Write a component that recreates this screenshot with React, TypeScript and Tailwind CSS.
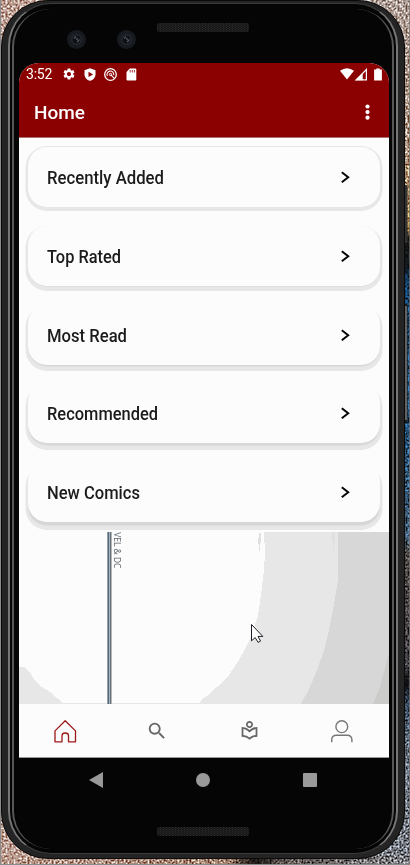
import React from "react";
import { MdSettings, MdSearch, MdOutlineLocalLibrary } from "react-icons/md";

const rows = [
  { label: "Recently Added", width: 117, shadow: "shadow-[0_1.5px_0_2.5px_#e7e7e7]" },
  { label: "Top Rated", width: 74, shadow: "shadow-[0_0.5px_0_0_#d8d8d8,0_2.5px_0_2.5px_#e7e7e7]" },
  { label: "Most Read", width: 80, shadow: "shadow-[0_1.5px_0_0_#d8d8d8,0_3.5px_0_2.5px_#e7e7e7]" },
  { label: "Recommended", width: 111, shadow: "shadow-[0_2.5px_0_0_#d8d8d8,0_4.5px_0_2.5px_#e7e7e7]" },
  { label: "New Comics", width: 93, shadow: "shadow-[0_3.5px_0_0_#d6d6d6,0_5.5px_0_2.5px_#e7e7e7]" },
];

function Wallpaper() {
  return (
    <svg className="absolute inset-0" width="410" height="865">
      <defs>
        <linearGradient id="right" x1="0" y1="0" x2="0" y2="1">
          <stop offset="0" stopColor="#a89b96" />
          <stop offset=".18" stopColor="#a8927f" />
          <stop offset=".26" stopColor="#ab854a" />
          <stop offset=".275" stopColor="#15130f" />
          <stop offset=".31" stopColor="#0c141c" />
          <stop offset=".325" stopColor="#123e66" />
          <stop offset=".5" stopColor="#204b70" />
          <stop offset=".62" stopColor="#3d5a75" />
          <stop offset=".64" stopColor="#4a4644" />
          <stop offset=".77" stopColor="#3b3a40" />
          <stop offset=".79" stopColor="#0a0a0c" />
          <stop offset=".81" stopColor="#2f4258" />
          <stop offset=".87" stopColor="#5f6a78" />
          <stop offset="1" stopColor="#727982" />
        </linearGradient>
        <linearGradient id="bottom" x1="0" x2="1">
          <stop offset="0" stopColor="#b89b90" />
          <stop offset=".55" stopColor="#9f8070" />
          <stop offset=".62" stopColor="#1a1614" />
          <stop offset=".7" stopColor="#5b5552" />
          <stop offset="1" stopColor="#777b82" />
        </linearGradient>
        <filter id="grain" x="0" y="0" width="100%" height="100%" colorInterpolationFilters="sRGB">
          <feTurbulence type="fractalNoise" baseFrequency=".5" numOctaves="3" seed="4" />
          <feColorMatrix values="2.4 0 0 0 -.66  2.4 0 0 0 -.68  2.4 0 0 0 -.69  0 0 0 0 1" />
        </filter>
      </defs>
      <rect width="205" height="865" fill="#b89c92" />
      <rect x="205" width="205" height="865" fill="url(#right)" />
      <rect y="855" width="410" height="10" fill="url(#bottom)" />
      <rect width="410" height="865" filter="url(#grain)" opacity=".85" style={{ mixBlendMode: "overlay" }} />
      <path d="M.5 0V864.5H410" fill="none" stroke="#8b8b8b" />
      <path d="M409.5 0V865" stroke="#777" strokeOpacity=".7" />
      <rect x="403" y="185" width="4.5" height="58" rx="1" fill="#333" />
      <rect x="403" y="304" width="4.5" height="118" rx="1" fill="#181818" />
      <path d="M406 306V420" stroke="#8a8a8a" strokeWidth="1.3" />
    </svg>
  );
}

function Speaker() {
  return (
    <svg width="92" height="9" className="block">
      <defs>
        <pattern id="mesh" width="3" height="2" patternUnits="userSpaceOnUse">
          <rect width="3" height="2" fill="#171717" />
          <rect width="1" height="1" fill="#2c2c2c" />
          <rect x="1.5" y="1" width="1" height="1" fill="#272727" />
        </pattern>
      </defs>
      <rect width="92" height="9" rx="2" fill="url(#mesh)" />
    </svg>
  );
}

function Camera() {
  return (
    <svg width="19" height="19" viewBox="0 0 19 19">
      <circle cx="9.5" cy="9.5" r="9.5" fill="#171b20" />
      <circle cx="9.5" cy="9.5" r="6" fill="#20242a" />
      <circle cx="9.5" cy="9.5" r="3.7" fill="#0c0e12" />
      <path d="M7 8.5L9 6.5M10 12L12.5 9.5" stroke="#535862" strokeWidth="1.2" />
      <circle cx="10" cy="9" r="1.2" fill="#3c414c" />
    </svg>
  );
}

function StatusBar() {
  return (
    <div className="flex h-[22px] items-center pl-[7px] pr-[7px] text-white">
      <span className="w-[36px] text-[14px] leading-[22px] tracking-[-0.2px]">3:52</span>
      <MdSettings className="size-[14px]" />
      <svg className="ml-[8px]" width="12" height="13" viewBox="0 0 12 13">
        <path d="M6 .3L11.5 2.3V6.2C11.5 9.4 9.2 11.9 6 12.8C2.8 11.9.5 9.4.5 6.2V2.3Z" fill="white" />
        <path d="M4.5 3.7L9 6.4L4.5 9.1Z" fill="#8b0000" />
      </svg>
      <svg className="ml-[8px]" width="13" height="13" viewBox="0 0 13 13" fill="none" stroke="white">
        <circle cx="6.5" cy="6.5" r="5.8" strokeWidth="1.3" />
        <path d="M3.4 8.1A3.4 3.4 0 1 1 9.7 7.2M6.6 6.6L10.6 10.6" strokeWidth="1.1" />
        <circle cx="6.5" cy="6.5" r="1.2" strokeWidth="1" />
      </svg>
      <svg className="ml-[9px]" width="11" height="13" viewBox="0 0 11 13">
        <path d="M3.8.5H9.3Q10.3.5 10.3 1.5V11.5Q10.3 12.5 9.3 12.5H1.5Q.5 12.5.5 11.5V4Z" fill="white" />
        <path d="M4.2 2V4.5M6.3 2V4.5M8.4 2V4.5" stroke="#8b0000" strokeWidth=".8" />
      </svg>
      <svg className="ml-auto" width="14" height="12" viewBox="0 0 14 12">
        <path d="M0 2.8Q7-2.2 14 2.8L7 11.5Z" fill="white" />
      </svg>
      <svg className="ml-[1px]" width="13" height="13" viewBox="0 0 13 13">
        <path d="M11.4 1.5V11.8H1.3Z" fill="none" stroke="white" strokeWidth="1.2" />
        <path d="M.2 12.3L7.7 5V12.3Z" fill="white" />
      </svg>
      <svg className="ml-[6px]" width="8" height="13" viewBox="0 0 8 13">
        <path d="M2.3.5H5.7V1.6H7.9V12.5H.1V1.6H2.3Z" fill="white" />
      </svg>
    </div>
  );
}

function Banner() {
  return (
    <svg className="block shrink-0" width="370" height="172" viewBox="19 532 370 172" shapeRendering="crispEdges">
      <rect x="19" y="532" width="370" height="172" fill="#fcfcfc" />
      <path d="M264 532H389V704H200L208 695L217 687L229 675L239 660L245 649L252 635L258 615L261 595L264 570L265 553Z" fill="#e7e7e7" />
      <path d="M338 532H389V704H301L309 689L317 670L324 651L329 630L334 604L338 580Z" fill="#d7d7d7" />
      <path d="M389 653V704H373L380 687L385 668Z" fill="#cbcbc9" />
      <path d="M332 532h3v11h-1v9h-1v-12h-2zM259 533h2v10h-1v8h-1v-7h-1zM257 560v8M256 590v10" fill="#e0e0e0" />
      <path d="M19 667H25L31 674L35 681L42 687L50 692L57 698L63 704H19Z" fill="#e7e7e7" />
      <path d="M199 704l2-3 3-4 4-1v8z" fill="#e7e7e7" />
      <rect x="19" y="703" width="240" height="1" fill="#e7e7e7" />
      <path d="M107.5 532V704" stroke="#9aa0a4" strokeWidth="1" />
      <path d="M108.5 532V704" stroke="#53687a" strokeWidth="1" />
      <path d="M109.5 532V704" stroke="#a5b1bb" strokeWidth="1" />
      <path d="M110.5 532V704" stroke="#66747f" strokeWidth="1" />
      <path d="M111.5 532V704" stroke="#b5b5b2" strokeWidth="1" />
      <text transform="translate(114 568.3) rotate(90)" textAnchor="end" textLength="36" lengthAdjust="spacingAndGlyphs" fontFamily="Open Sans, sans-serif" fontSize="9.8" fill="#5d666d" textRendering="geometricPrecision">VEL &amp; DC</text>
      <path d="M251.5 624.5V640.8L255.2 637.6L258.1 642.4L260.5 641.1L258 636.4H262.8Z" fill="white" stroke="#1e1e28" strokeWidth="1" shapeRendering="auto" />
    </svg>
  );
}

function BottomNav() {
  return (
    <nav className="grid h-[54px] grid-cols-4 place-items-center border-b border-[#999] bg-[#fcfcfc] pr-px text-[#666]">
      <svg width="23" height="24" viewBox="0 0 23 24" fill="none" stroke="#9d1717" strokeWidth="1.3" strokeLinejoin="round">
        <path d="M1 11.9L11.2 1.8L21.5 11.9V22.8H14.5V16.8Q14.5 14 11.2 14Q8 14 8 16.8V22.8H1Z" />
      </svg>
      <MdSearch className="size-[22px]" />
      <MdOutlineLocalLibrary className="size-[21px]" />
      <svg width="23" height="24" viewBox="0 0 23 24" fill="none" stroke="#777" strokeWidth="1.4">
        <circle cx="11.8" cy="7.7" r="5.9" />
        <path d="M1.7 23.3V21Q1.7 16.2 6.5 16.2H17.1Q21.9 16.2 21.9 21V23.3" />
      </svg>
    </nav>
  );
}

export default function App() {
  return (
    <div className="relative h-[865px] w-[410px] overflow-hidden font-['Roboto',sans-serif]">
      <Wallpaper />
      <div className="relative ml-px h-[859px] w-[404px] rounded-[47px] border border-[#0a0a0a] bg-[#242424] pl-[6px] pr-[6px] pt-[2px]">
        <div className="h-[851px] w-[390px] rounded-[43px] border-x-2 border-y border-x-[#777] border-y-[#3a3a3a] bg-[#050505] pl-[2px] pr-[2px] pt-[5px]">
          <div className="flex h-[840px] w-[382px] flex-col rounded-[38px] border-x-2 border-x-[#575757] bg-[#050505] pl-[5px] pr-[3px]">
            <div className="flex h-[54px] shrink-0 pl-[48px] pt-[14px]">
              <div className="mt-[7px] flex gap-[31px]">
                <Camera />
                <Camera />
              </div>
              <div className="ml-[21px]"><Speaker /></div>
            </div>
            <div className="h-[695px] w-[370px] shrink-0 overflow-hidden rounded-t-[20px] bg-[#fcfcfc]">
              <header className="h-[75px] border-b border-[#a77474] bg-[#8b0000]">
                <StatusBar />
                <div className="flex h-[54px] items-center justify-between pl-[15px] pr-[19px] text-white">
                  <h1 className="pt-[2px] text-[19px] font-medium leading-[54px]">Home</h1>
                  <svg width="5" height="16" viewBox="0 0 5 16" fill="white">
                    <circle cx="2.5" cy="2.5" r="2.1" />
                    <circle cx="2.5" cy="8.1" r="2.1" />
                    <circle cx="2.5" cy="13.7" r="2.1" />
                  </svg>
                </div>
              </header>
              <main className="flex h-[394px] flex-col gap-[18.8px] px-[9px] pt-[9px]">
                {rows.map((row) => (
                  <button
                    key={row.label}
                    className={`flex h-[60px] w-[352px] shrink-0 items-center justify-between rounded-[19px] bg-[#fcfcfc] pl-[19px] pr-[30px] ${row.shadow}`}
                  >
                    <svg width="130" height="30" className="overflow-visible">
                      <text y="21.6" textLength={row.width} lengthAdjust="spacingAndGlyphs" fontSize="19.2" fontWeight="500" fill="#1b1b1b">{row.label}</text>
                    </svg>
                    <svg width="9" height="12" viewBox="0 0 9 12" fill="none" stroke="#050505" strokeWidth="2">
                      <path d="M.8 1.2L7.2 6.2L.8 11.2" />
                    </svg>
                  </button>
                ))}
              </main>
              <Banner />
              <BottomNav />
            </div>
            <div className="flex h-[44px] shrink-0 items-center justify-between pl-[70px] pr-[72px]">
              <svg width="14" height="16" fill="#999"><path d="M0 8L14 0V16Z" /></svg>
              <div className="size-[14px] rounded-full bg-[#999]" />
              <div className="size-[14px] rounded-[1px] bg-[#999]" />
            </div>
            <div className="ml-[138px] mt-[25px]"><Speaker /></div>
          </div>
        </div>
      </div>
    </div>
  );
}
